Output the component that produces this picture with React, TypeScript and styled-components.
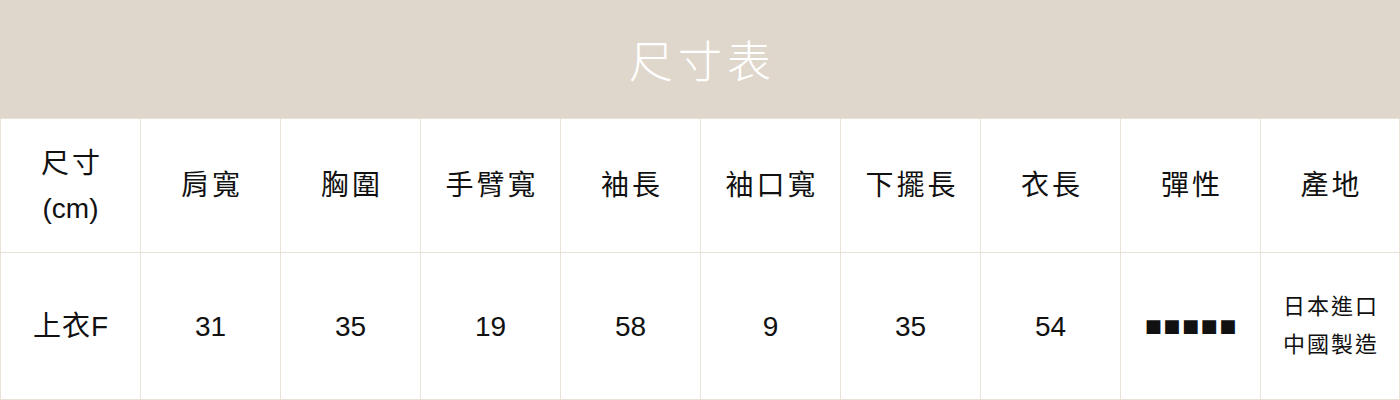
import React from "react";
import styled, { createGlobalStyle } from "styled-components";

const Global = createGlobalStyle`
  html, body { margin: 0; padding: 0; background: #ffffff; }
  body { font-family: "Liberation Sans", "Noto Sans CJK TC", sans-serif; overflow: hidden; }
  * { box-sizing: border-box; }
`;

const Page = styled.div`
  width: 1400px;
  height: 400px;
  display: flex;
  flex-direction: column;
`;

const TitleBar = styled.header`
  height: 118px;
  background: #dfd7cc;
  display: flex;
  align-items: center;
  justify-content: center;
`;

const Title = styled.h1`
  margin: 0;
  padding-left: 5px;
  color: #ffffff;
  font-family: "Noto Sans CJK TC", sans-serif;
  font-weight: 300;
  font-size: 44px;
  letter-spacing: 5px;
  line-height: 1;
`;

const Row = styled.div<{ $h: number; $last?: boolean }>`
  display: grid;
  grid-template-columns: repeat(10, 140px);
  height: ${(p) => p.$h}px;
  border-top: 1px solid #e9e2d7;
  ${(p) => (p.$last ? "border-bottom: 1px solid #e9e2d7;" : "")}
`;

const Cell = styled.div`
  display: flex;
  flex-direction: column;
  align-items: center;
  justify-content: center;
  text-align: center;
  border-left: 1px solid #e9e2d7;
  color: #111111;
  font-size: 28px;
  line-height: 45px;
  &:last-child { border-right: 1px solid #e9e2d7; }
`;

const Cjk = styled.span<{ $sp?: number }>`
  letter-spacing: ${(p) => p.$sp ?? 3}px;
  padding-left: ${(p) => p.$sp ?? 3}px;
`;

const Small = styled.div`
  font-size: 22px;
  letter-spacing: 2px;
  padding-left: 2px;
  line-height: 38px;
`;

const Squares = styled.div`
  font-family: "DejaVu Sans", sans-serif;
  font-size: 18px;
  letter-spacing: 1.6px;
  padding-left: 1.6px;
  line-height: 1;
`;

const headers = ["肩寬", "胸圍", "手臂寬", "袖長", "袖口寬", "下擺長", "衣長", "彈性", "產地"];
const values = ["31", "35", "19", "58", "9", "35", "54"];

export default function App() {
  return (
    <>
      <Global />
      <Page>
        <TitleBar>
          <Title>尺寸表</Title>
        </TitleBar>
        <Row $h={134}>
          <Cell>
            <Cjk>尺寸</Cjk>
            <span>(cm)</span>
          </Cell>
          {headers.map((h) => (
            <Cell key={h}>
              <Cjk>{h}</Cjk>
            </Cell>
          ))}
        </Row>
        <Row $h={148} $last>
          <Cell>
            <Cjk $sp={1}>上衣F</Cjk>
          </Cell>
          {values.map((v, i) => (
            <Cell key={i}>{v}</Cell>
          ))}
          <Cell>
            <Squares>■■■■■</Squares>
          </Cell>
          <Cell>
            <Small>日本進口</Small>
            <Small>中國製造</Small>
          </Cell>
        </Row>
      </Page>
    </>
  );
}
